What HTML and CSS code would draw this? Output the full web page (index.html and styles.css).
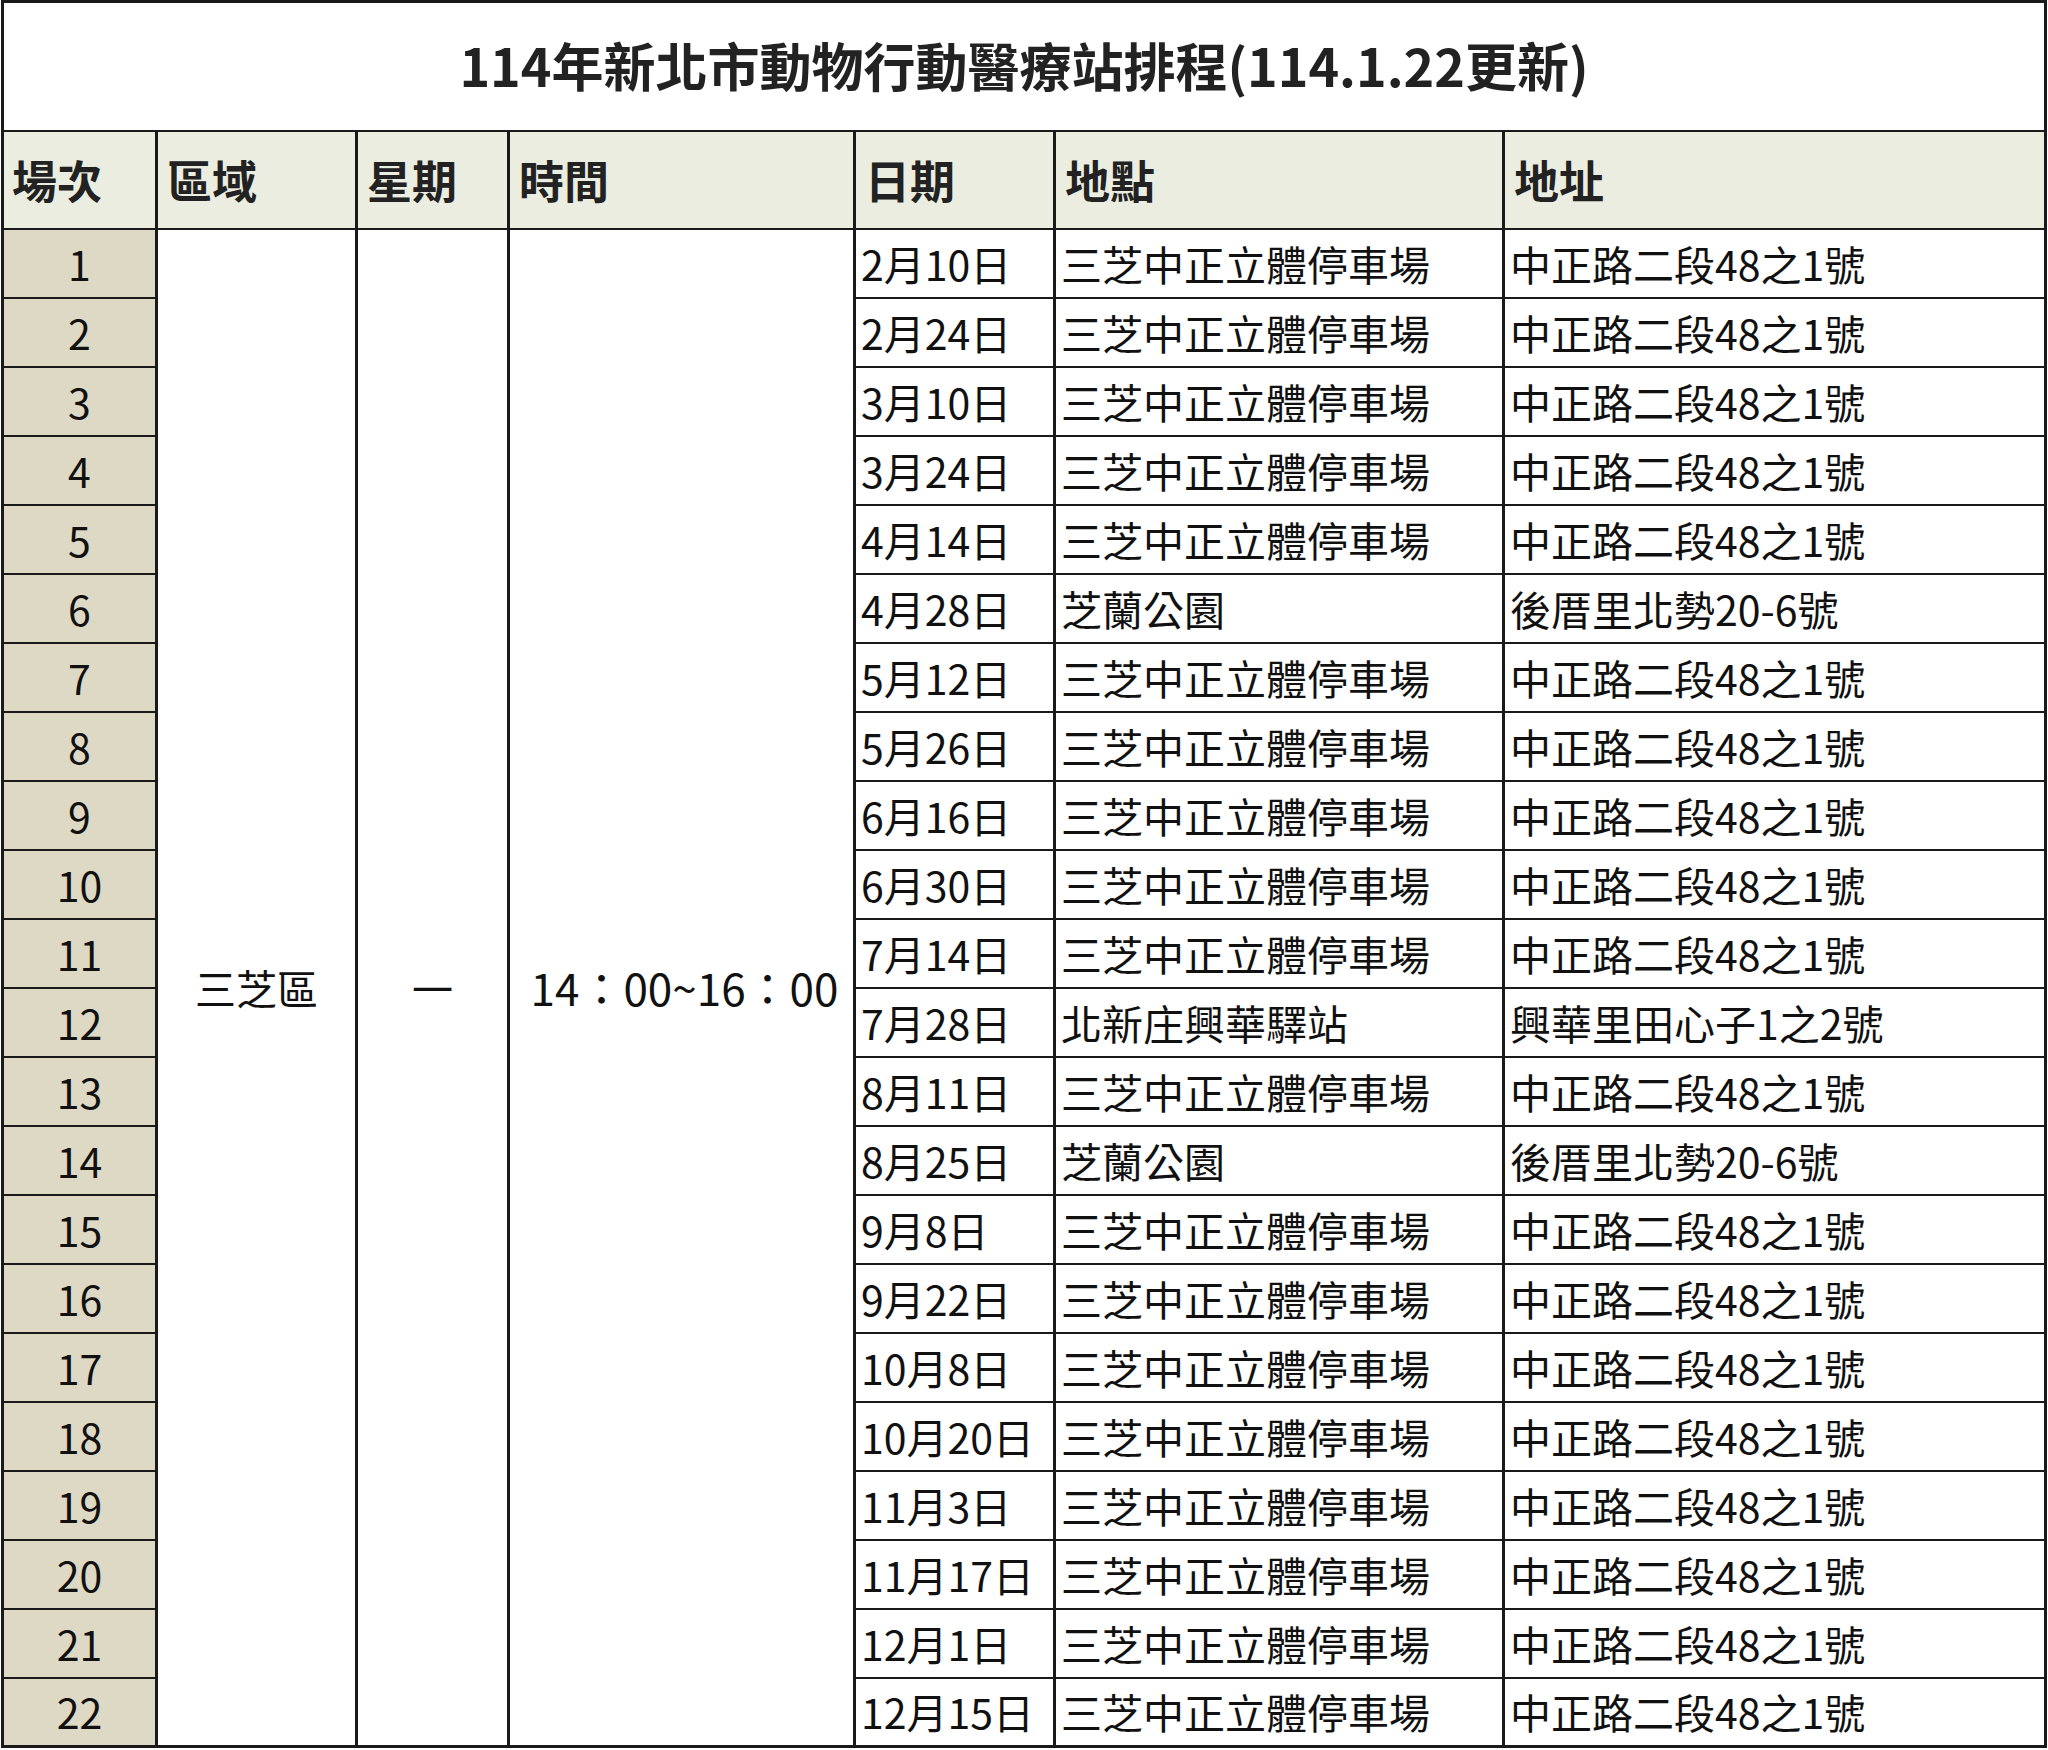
FILE: index.html
```html
<!DOCTYPE html>
<html lang="zh-Hant">
<head>
<meta charset="utf-8">
<title>114年新北市動物行動醫療站排程</title>
<link rel="stylesheet" href="styles.css">
</head>
<body>
<table class="schedule">
  <colgroup>
    <col class="c-no"><col class="c-area"><col class="c-day"><col class="c-time"><col class="c-date"><col class="c-place"><col class="c-addr">
  </colgroup>
  <thead>
    <tr class="title-row"><th colspan="7" class="cell title">114年新北市動物行動醫療站排程(114.1.22更新)</th></tr>
    <tr class="head-row">
      <th class="cell head head-first">場次</th><th class="cell head">區域</th><th class="cell head">星期</th><th class="cell head">時間</th><th class="cell head">日期</th><th class="cell head">地點</th><th class="cell head">地址</th>
    </tr>
  </thead>
  <tbody>
    <tr><td class="cell no">1</td><td class="cell merged" rowspan="22">三芝區</td><td class="cell merged" rowspan="22">一</td><td class="cell merged time" rowspan="22">14：00~16：00</td><td class="cell txt">2月10日</td><td class="cell txt">三芝中正立體停車場</td><td class="cell txt">中正路二段48之1號</td></tr>
    <tr><td class="cell no">2</td><td class="cell txt">2月24日</td><td class="cell txt">三芝中正立體停車場</td><td class="cell txt">中正路二段48之1號</td></tr>
    <tr><td class="cell no">3</td><td class="cell txt">3月10日</td><td class="cell txt">三芝中正立體停車場</td><td class="cell txt">中正路二段48之1號</td></tr>
    <tr><td class="cell no">4</td><td class="cell txt">3月24日</td><td class="cell txt">三芝中正立體停車場</td><td class="cell txt">中正路二段48之1號</td></tr>
    <tr><td class="cell no">5</td><td class="cell txt">4月14日</td><td class="cell txt">三芝中正立體停車場</td><td class="cell txt">中正路二段48之1號</td></tr>
    <tr><td class="cell no">6</td><td class="cell txt">4月28日</td><td class="cell txt">芝蘭公園</td><td class="cell txt">後厝里北勢20-6號</td></tr>
    <tr><td class="cell no">7</td><td class="cell txt">5月12日</td><td class="cell txt">三芝中正立體停車場</td><td class="cell txt">中正路二段48之1號</td></tr>
    <tr><td class="cell no">8</td><td class="cell txt">5月26日</td><td class="cell txt">三芝中正立體停車場</td><td class="cell txt">中正路二段48之1號</td></tr>
    <tr><td class="cell no">9</td><td class="cell txt">6月16日</td><td class="cell txt">三芝中正立體停車場</td><td class="cell txt">中正路二段48之1號</td></tr>
    <tr><td class="cell no">10</td><td class="cell txt">6月30日</td><td class="cell txt">三芝中正立體停車場</td><td class="cell txt">中正路二段48之1號</td></tr>
    <tr><td class="cell no">11</td><td class="cell txt">7月14日</td><td class="cell txt">三芝中正立體停車場</td><td class="cell txt">中正路二段48之1號</td></tr>
    <tr><td class="cell no">12</td><td class="cell txt">7月28日</td><td class="cell txt">北新庄興華驛站</td><td class="cell txt">興華里田心子1之2號</td></tr>
    <tr><td class="cell no">13</td><td class="cell txt">8月11日</td><td class="cell txt">三芝中正立體停車場</td><td class="cell txt">中正路二段48之1號</td></tr>
    <tr><td class="cell no">14</td><td class="cell txt">8月25日</td><td class="cell txt">芝蘭公園</td><td class="cell txt">後厝里北勢20-6號</td></tr>
    <tr><td class="cell no">15</td><td class="cell txt">9月8日</td><td class="cell txt">三芝中正立體停車場</td><td class="cell txt">中正路二段48之1號</td></tr>
    <tr><td class="cell no">16</td><td class="cell txt">9月22日</td><td class="cell txt">三芝中正立體停車場</td><td class="cell txt">中正路二段48之1號</td></tr>
    <tr><td class="cell no">17</td><td class="cell txt">10月8日</td><td class="cell txt">三芝中正立體停車場</td><td class="cell txt">中正路二段48之1號</td></tr>
    <tr><td class="cell no">18</td><td class="cell txt">10月20日</td><td class="cell txt">三芝中正立體停車場</td><td class="cell txt">中正路二段48之1號</td></tr>
    <tr><td class="cell no">19</td><td class="cell txt">11月3日</td><td class="cell txt">三芝中正立體停車場</td><td class="cell txt">中正路二段48之1號</td></tr>
    <tr><td class="cell no">20</td><td class="cell txt">11月17日</td><td class="cell txt">三芝中正立體停車場</td><td class="cell txt">中正路二段48之1號</td></tr>
    <tr><td class="cell no">21</td><td class="cell txt">12月1日</td><td class="cell txt">三芝中正立體停車場</td><td class="cell txt">中正路二段48之1號</td></tr>
    <tr><td class="cell no">22</td><td class="cell txt">12月15日</td><td class="cell txt">三芝中正立體停車場</td><td class="cell txt">中正路二段48之1號</td></tr>
  </tbody>
</table>
</body>
</html>
```
FILE: styles.css
```css
html, body {
  margin: 0;
  padding: 0;
  background: #ffffff;
}

.schedule {
  width: 2046px;
  border-collapse: collapse;
  table-layout: fixed;
  font-family: "Noto Sans CJK TC", "Noto Sans", sans-serif;
  color: #111111;
  border: 3px solid #1a1a1a;
  margin-left: 1px;
}

.c-no { width: 154px; }
.c-area { width: 200px; }
.c-day { width: 152px; }
.c-time { width: 346px; }
.c-date { width: 200px; }
.c-place { width: 449px; }

.cell {
  border-left: 3px solid #1a1a1a;
  border-right: 3px solid #1a1a1a;
  border-top: 2px solid #1a1a1a;
  border-bottom: 2px solid #1a1a1a;
  padding: 0;
  line-height: 1;
  white-space: nowrap;
  overflow: hidden;
}

.title-row { height: 129px; }

.title {
  font-size: 52px;
  font-weight: 700;
  color: #222222;
  text-align: center;
  background: #ffffff;
  padding-bottom: 2px;
}

.head-row { height: 98px; }

.head {
  background: #eaeddf;
  font-size: 45px;
  font-weight: 700;
  color: #222222;
  text-align: left;
  padding-left: 9px;
}

.head-first { padding-left: 8px; }

.schedule tbody tr { height: 69px; }

.no {
  background: #ddd9c4;
  text-align: center;
  font-size: 41px;
}

.merged {
  text-align: center;
  vertical-align: middle;
  font-size: 41px;
  background: #ffffff;
}

.time {
  font-size: 44px;
  padding-left: 6px;
}

.txt {
  font-size: 41px;
  text-align: left;
  padding-left: 5px;
}
```
